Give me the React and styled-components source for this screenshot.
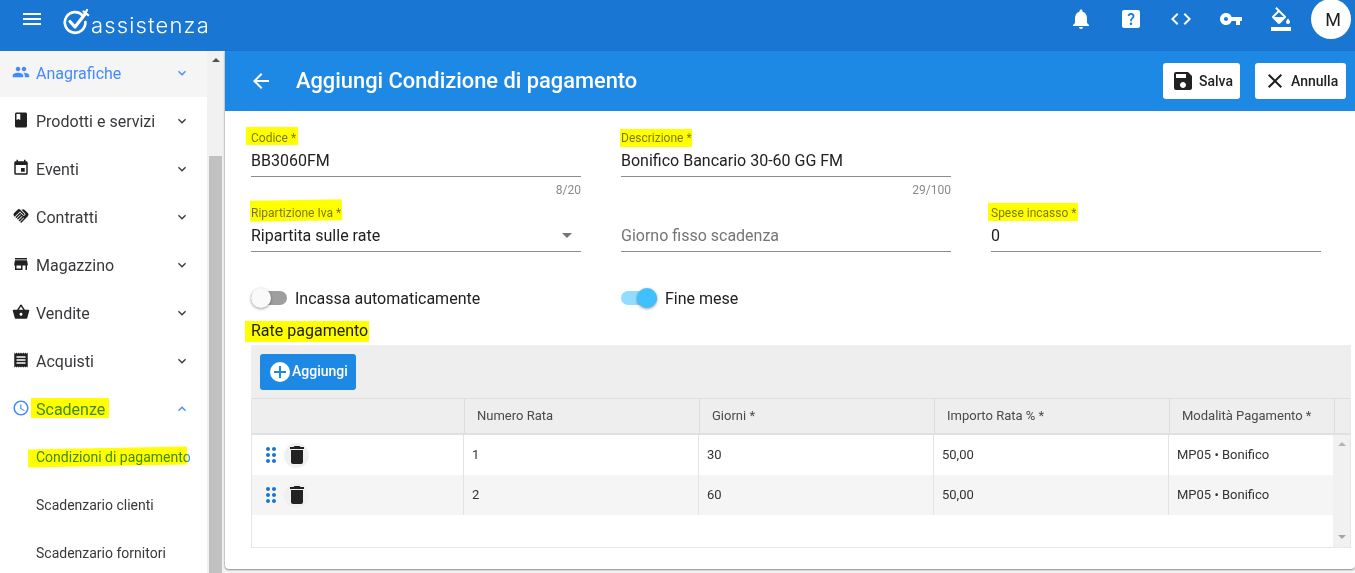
import React from "react";
import styled, { createGlobalStyle } from "styled-components";
import {
  MdMenu, MdPeople, MdBook, MdEvent, MdHandshake, MdStore, MdShoppingBasket, MdReceipt, MdAccessTime,
  MdKeyboardArrowDown, MdKeyboardArrowUp, MdNotifications, MdHelpCenter, MdCode, MdVpnKey, MdFormatColorFill,
  MdSave, MdClose, MdArrowBack, MdDelete, MdDragIndicator, MdArrowDropDown,
} from "react-icons/md";

const Global = createGlobalStyle`
  html, body { margin: 0; padding: 0; height: 100%; overflow: hidden; background: #f5f5f5; }
  body { font-family: Roboto, "Liberation Sans", sans-serif; color: #212121; }
  * { box-sizing: border-box; }
`;

const Page = styled.div`
  width: 1355px; height: 573px; overflow: hidden;
  display: flex; flex-direction: column;
`;

const TopBar = styled.header`
  height: 51px; flex: none; background: #1976d2; color: #fff;
  display: flex; align-items: flex-start;
`;
const MenuButton = styled.div`
  width: 63px; height: 38px; display: flex; align-items: center;
  padding-left: 20px; font-size: 24px;
`;
const Brand = styled.div`
  display: flex; align-items: center; height: 43px; gap: 0;
`;
const BrandName = styled.span`
  font-family: Inter, sans-serif; font-weight: 300; font-size: 22px; letter-spacing: 1.15px; line-height: 44px;
  margin-top: 6px;
`;
const TopActions = styled.div`
  margin-left: auto; display: flex; align-items: center; height: 38px; padding-right: 4px;
`;
const TopIcon = styled.div`
  width: 50px; height: 38px; display: flex; align-items: center; justify-content: center; font-size: 24px;
`;
const Avatar = styled.div`
  width: 40px; height: 40px; margin-left: 5px; padding-left: 4px; border-radius: 50%; background: #fff; color: #212121;
  display: flex; align-items: center; justify-content: center; font-size: 18px;
`;

const Body = styled.div`
  flex: 1; display: flex; min-height: 0;
`;
const Sidebar = styled.nav`
  width: 207px; flex: none; background: #fff; overflow: hidden;
`;
const NavList = styled.ul`
  list-style: none; margin: -2px 0 0; padding: 0;
`;
const NavItem = styled.li`
  height: 48px; display: flex; align-items: center; padding-left: 12px; padding-right: 17px;
  font-size: ${p => (p.$sub ? 14 : 16)}px;
  color: ${p => (p.$active ? "#448aff" : "#37393c")};
  background: ${p => (p.$hover ? "#f5f5f5" : "#fff")};
`;
const NavIcon = styled.span`
  width: 24px; display: flex; font-size: 18px; margin-top: -3px;
  color: ${p => (p.$active ? "#448aff" : "#212121")};
`;
const NavLabel = styled.span`
  position: relative; flex: 1; white-space: nowrap; margin-left: ${p => (p.$sub ? 24 : 0)}px;
`;
const NavChevron = styled.span`
  display: flex; font-size: 16px; color: ${p => (p.$active ? "#448aff" : "#37393c")};
`;

const Highlight = styled.span`
  position: relative; display: inline-block;
  &::after {
    content: ""; position: absolute; background: #ffff00; mix-blend-mode: multiply; pointer-events: none;
    left: ${p => p.$l}px; right: ${p => p.$r}px; top: ${p => p.$t}px; bottom: ${p => p.$b}px;
    transform: rotate(${p => p.$rot || 0}deg);
  }
`;

const ScrollTrack = styled.div`
  width: 17px; flex: none; background: #f1f1f1; display: flex; flex-direction: column; align-items: center;
  padding-top: 7px;
`;
const ArrowUp = styled.div`
  width: 0; height: 0; border-left: 4px solid transparent; border-right: 4px solid transparent;
  border-bottom: 4px solid ${p => p.$color || "#505050"};
`;
const ArrowDown = styled.div`
  width: 0; height: 0; border-left: 4px solid transparent; border-right: 4px solid transparent;
  border-top: 4px solid ${p => p.$color || "#505050"};
`;
const ScrollThumb = styled.div`
  width: 13px; flex: 1; margin-top: 94px; background: #c1c1c1;
`;

const Main = styled.main`
  flex: 1; margin-left: 1px; height: 518px; background: #fff; border-radius: 0 0 4px 4px;
  box-shadow: 0 1px 2px rgba(0,0,0,.45), -1px 0 1px rgba(0,0,0,.08);
  display: flex; flex-direction: column;
`;
const TitleBar = styled.div`
  height: 60px; flex: none; background: #1e88e5; color: #fff; display: flex; align-items: center; padding: 0 9px 0 25px;
`;
const BackIcon = styled.span`
  display: flex; font-size: 24px; margin-right: 22px; margin-left: -1px; padding-right: 1px;
`;
const Title = styled.h1`
  margin: 0; font-size: 21.85px; font-weight: 500; flex: 1; position: relative; top: -1px;
`;
const HeadButton = styled.button`
  width: ${p => p.$w}px; height: 36px; border: 0; border-radius: 3px; background: #fff; color: #212121;
  font: 500 14px Roboto, sans-serif;
  display: flex; align-items: center; gap: 4px; padding: 0 0 0 8px; margin-left: 15px;
  svg { font-size: 24px; flex: none; }
`;

const Form = styled.div`
  padding: 20px 4px 0 26px;
`;
const FieldRow = styled.div`
  display: grid; grid-template-columns: repeat(3, 330px); column-gap: 40px; margin-bottom: 9px;
`;
const Field = styled.div`
  display: flex; flex-direction: column;
`;
const Label = styled.label`
  display: block; height: 14px; font-size: 12px; line-height: 14px; color: rgba(0,0,0,.54);
`;
const Input = styled.div`
  margin-top: 3px; height: 29px; padding-top: 1px; border-bottom: 1px solid #8c8c8c; font-size: 16px; line-height: 24px;
  display: flex; justify-content: space-between; color: ${p => (p.$placeholder ? "#757575" : "#212121")};
  svg { font-size: 24px; color: #757575; margin: -1px 2px 0 0; }
`;
const Counter = styled.div`
  margin-top: 6px; text-align: right; font-size: 12px; line-height: 14px; color: #8a8a8a;
`;
const SwitchRow = styled.div`
  display: grid; grid-template-columns: repeat(3, 330px); column-gap: 40px; margin-top: 36px;
`;
const SwitchField = styled.div`
  display: flex; align-items: center; gap: 8px; font-size: 16px; height: 20px;
`;
const SwitchTrack = styled.span`
  position: relative; display: block; width: 36px; height: 14px; border-radius: 7px;
  background: ${p => (p.$on ? "#92dcff" : "#9e9e9e")};
  &::after {
    content: ""; position: absolute; top: -3px; left: ${p => (p.$on ? 16 : 0)}px; width: 20px; height: 20px; border-radius: 50%;
    background: ${p => (p.$on ? "#40c0ff" : "#fafafa")};
    box-shadow: 0 1px 3px rgba(0,0,0,.4);
  }
`;
const SectionTitle = styled.div`
  margin-top: 13px; font-size: 16px; line-height: 20px; color: #212121;
`;

const Panel = styled.section`
  margin-top: 4px; width: 1100px; height: 203px; border: 1px solid #e6e6e6; border-top: 0; display: flex; flex-direction: column;
`;
const Toolbar = styled.div`
  height: 53px; flex: none; background: #eee; padding: 9px 0 0 9px; margin: 0 -1px;
`;
const AddButton = styled.button`
  height: 36px; width: 96px; border: 0; border-radius: 3px; background: #1e88e5; color: #fff;
  font: 500 14px Roboto, sans-serif; display: flex; align-items: center; padding: 0 0 0 10px;
`;
const AddDisc = styled.span`
  width: 20px; height: 20px; border-radius: 50%; background: #fff; flex: none; position: relative; margin-right: 2px;
  &::before { content: ""; position: absolute; left: 4px; right: 4px; top: 9px; height: 2px; background: #1e88e5; }
  &::after { content: ""; position: absolute; top: 4px; bottom: 4px; left: 9px; width: 2px; background: #1e88e5; }
`;
const AddText = styled.span`
  position: relative; top: -1px;
`;
const HeadRow = styled.div`
  display: grid; grid-template-columns: 213px 235px 235px 235px 165px 1fr; height: 37px; flex: none;
  background: #eee; border-top: 1px solid #dedede; border-bottom: 2px solid #e0e0e0;
`;
const HeadCell = styled.div`
  display: flex; align-items: center; padding: 0 0 2px 12px; font-size: 13px; color: #4a4a4a; border-right: 1px solid #dcdcdc;
  &:last-child { border-right: 0; }
`;
const TableBody = styled.div`
  flex: 1; display: flex; min-height: 0; background: #fff;
`;
const Rows = styled.div`
  width: 1081px; flex: none;
`;
const Row = styled.div`
  display: grid; grid-template-columns: 212px 235px 235px 235px 164px; height: 40px;
  background: ${p => (p.$alt ? "#f5f5f5" : "#fff")};
`;
const Cell = styled.div`
  display: flex; align-items: center; padding: 0 0 2px 8px; font-size: 13px; color: #333; border-right: 1px solid #e4e4e4;
  &:last-child { border-right: 0; }
`;
const ActionCell = styled(Cell)`
  padding: 0 0 0 7px;
`;
const Drag = styled.span`
  display: flex; width: 24px; font-size: 24px; color: #1976d2; margin-right: 1px;
`;
const Trash = styled.span`
  width: 25px; height: 25px; border-radius: 50%; background: #f0f0f0; display: flex; align-items: center; justify-content: center;
  font-size: 24px; color: #212121;
`;
const TableScroll = styled.div`
  flex: 1; background: #f1f1f1; display: flex; flex-direction: column; align-items: center; justify-content: space-between;
  padding: 7px 0 8px;
`;

const Logo = () => (
  <svg width="28" height="28" viewBox="0 0 28 28" fill="none" stroke="#fff" strokeLinecap="round" strokeLinejoin="round">
    <path d="M19.8 7.6 A10.3 10.3 0 1 0 22.4 14" strokeWidth="2.7" />
    <path d="M7 13.5 L12 19 L22.5 5.5" strokeWidth="3.2" />
    <path d="M20.5 3.5 L25.2 7.2 M24 2 L22.8 4.2" strokeWidth="2.2" />
  </svg>
);

const menu = [
  { label: "Anagrafiche", icon: MdPeople, active: true, hover: true },
  { label: "Prodotti e servizi", icon: MdBook },
  { label: "Eventi", icon: MdEvent },
  { label: "Contratti", icon: MdHandshake },
  { label: "Magazzino", icon: MdStore },
  { label: "Vendite", icon: MdShoppingBasket },
  { label: "Acquisti", icon: MdReceipt },
];

const rows = [
  { n: 1, g: 30 },
  { n: 2, g: 60 },
];

export default function App() {
  return (
    <Page>
      <Global />
      <TopBar>
        <MenuButton><MdMenu /></MenuButton>
        <Brand>
          <Logo />
          <BrandName>assistenza</BrandName>
        </Brand>
        <TopActions>
          <TopIcon><MdNotifications /></TopIcon>
          <TopIcon><MdHelpCenter /></TopIcon>
          <TopIcon><MdCode /></TopIcon>
          <TopIcon><MdVpnKey /></TopIcon>
          <TopIcon><MdFormatColorFill /></TopIcon>
          <Avatar>M</Avatar>
        </TopActions>
      </TopBar>
      <Body>
        <Sidebar>
          <NavList>
            {menu.map(({ label, icon: Icon, active, hover }) => (
              <NavItem key={label} $active={active} $hover={hover}>
                <NavIcon $active={active}><Icon /></NavIcon>
                <NavLabel>{label}</NavLabel>
                <NavChevron $active={active}><MdKeyboardArrowDown /></NavChevron>
              </NavItem>
            ))}
            <NavItem $active>
              <NavIcon $active><MdAccessTime /></NavIcon>
              <NavLabel><Highlight $l={-5} $r={-4} $t={-2} $b={1}>Scadenze</Highlight></NavLabel>
              <NavChevron $active><MdKeyboardArrowUp /></NavChevron>
            </NavItem>
            <NavItem $sub $active>
              <NavLabel $sub><Highlight $l={-8} $r={4} $t={-1} $b={-1} $rot={-1}>Condizioni di pagamento</Highlight></NavLabel>
            </NavItem>
            <NavItem $sub><NavLabel $sub>Scadenzario clienti</NavLabel></NavItem>
            <NavItem $sub><NavLabel $sub>Scadenzario fornitori</NavLabel></NavItem>
          </NavList>
        </Sidebar>
        <ScrollTrack>
          <ArrowUp />
          <ScrollThumb />
        </ScrollTrack>
        <Main>
          <TitleBar>
            <BackIcon><MdArrowBack /></BackIcon>
            <Title>Aggiungi Condizione di pagamento</Title>
            <HeadButton $w={77}><MdSave />Salva</HeadButton>
            <HeadButton $w={91}><MdClose />Annulla</HeadButton>
          </TitleBar>
          <Form>
            <FieldRow>
              <Field>
                <Label><Highlight $l={-5} $r={-2} $t={-4} $b={0}>Codice *</Highlight></Label>
                <Input>BB3060FM</Input>
                <Counter>8/20</Counter>
              </Field>
              <Field>
                <Label><Highlight $l={-1} $r={0} $t={-2} $b={-2}>Descrizione *</Highlight></Label>
                <Input>Bonifico Bancario 30-60 GG FM</Input>
                <Counter>29/100</Counter>
              </Field>
            </FieldRow>
            <FieldRow>
              <Field>
                <Label><Highlight $l={-1} $r={-1} $t={-6} $b={-1} $rot={-1}>Ripartizione Iva *</Highlight></Label>
                <Input>Ripartita sulle rate<MdArrowDropDown /></Input>
              </Field>
              <Field>
                <Label />
                <Input $placeholder>Giorno fisso scadenza</Input>
              </Field>
              <Field>
                <Label><Highlight $l={-3} $r={-1} $t={-3} $b={-1}>Spese incasso *</Highlight></Label>
                <Input>0</Input>
              </Field>
            </FieldRow>
            <SwitchRow>
              <SwitchField><SwitchTrack />Incassa automaticamente</SwitchField>
              <SwitchField><SwitchTrack $on />Fine mese</SwitchField>
            </SwitchRow>
            <SectionTitle><Highlight $l={-6} $r={-1} $t={0} $b={-1}>Rate pagamento</Highlight></SectionTitle>
            <Panel>
              <Toolbar>
                <AddButton><AddDisc /><AddText>Aggiungi</AddText></AddButton>
              </Toolbar>
              <HeadRow>
                <HeadCell />
                <HeadCell>Numero Rata</HeadCell>
                <HeadCell>Giorni *</HeadCell>
                <HeadCell>Importo Rata % *</HeadCell>
                <HeadCell>Modalità Pagamento *</HeadCell>
                <HeadCell />
              </HeadRow>
              <TableBody>
                <Rows>
                  {rows.map((r, i) => (
                    <Row key={r.n} $alt={i % 2 === 1}>
                      <ActionCell>
                        <Drag><MdDragIndicator /></Drag>
                        <Trash><MdDelete /></Trash>
                      </ActionCell>
                      <Cell>{r.n}</Cell>
                      <Cell>{r.g}</Cell>
                      <Cell>50,00</Cell>
                      <Cell>MP05 • Bonifico</Cell>
                    </Row>
                  ))}
                </Rows>
                <TableScroll>
                  <ArrowUp $color="#b5b5b5" />
                  <ArrowDown $color="#a5a5a5" />
                </TableScroll>
              </TableBody>
            </Panel>
          </Form>
        </Main>
      </Body>
    </Page>
  );
}
